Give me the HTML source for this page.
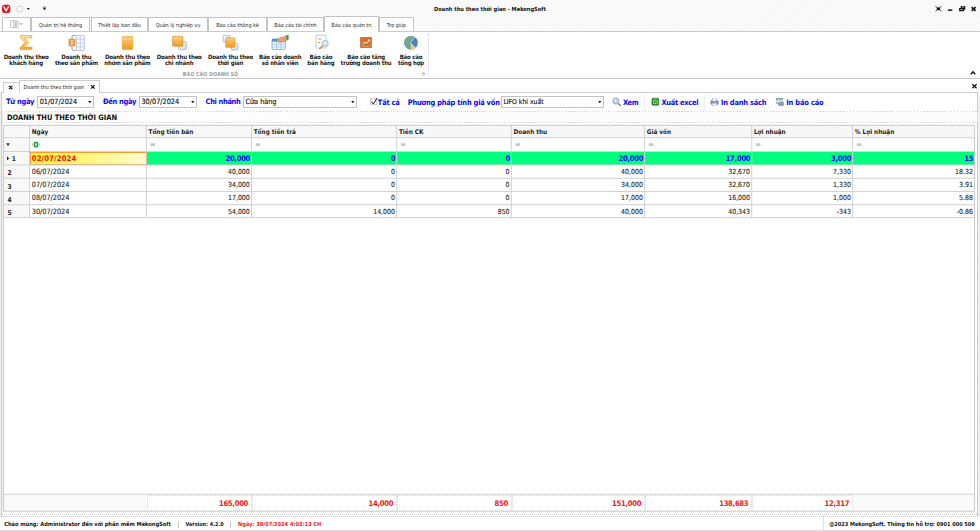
<!DOCTYPE html>
<html><head><meta charset="utf-8"><title>Doanh thu theo thời gian - MekongSoft</title>
<style>
*{box-sizing:border-box;margin:0;padding:0}
html,body{width:980px;height:531px;overflow:hidden;background:#fff}
body{font-family:"DejaVu Sans Condensed","Liberation Sans",sans-serif;font-size:6px;color:#222;position:relative}
div{position:absolute}
svg{position:absolute;overflow:visible}
.hatch{background:repeating-linear-gradient(135deg,#ffffff 0,#f3f3f3 1.060px,#ffffff 2.120px)}
.hatch2{background:repeating-linear-gradient(135deg,#ffffff 0,#f0f0f0 1.060px,#ffffff 2.120px)}
.t{white-space:nowrap;line-height:10px;height:10px}
.tab{top:17px;height:14px;border:1px solid #c4c4c4;border-bottom:none;background:#fff}
.box{border:1px solid #c3c3c3;background:#fff}
</style></head><body>

<div class="hatch" style="left:0;top:0;width:980px;height:31.500px"></div>
<div class="t" style="top:4.01px;font-size:5.66px;color:#111;font-weight:bold;left:340.00px;width:300px;text-align:center;">Doanh thu theo thời gian - MekongSoft</div>
<svg style="left:0;top:0" width="60" height="17" viewBox="0 0 60 17"><rect x="2" y="4.800" width="8.300" height="8.300" rx="2.400" fill="#e8121d"/><path d="M4 7 L6.100 11 L8.300 7" fill="none" stroke="#fff" stroke-width="1.500" stroke-linecap="round" stroke-linejoin="round"/><circle cx="19.600" cy="9" r="3" fill="#fff" stroke="#b9b9b9" stroke-width="0.700"/><path d="M26.800 8 h3 l-1.500 2z" fill="#222"/><path d="M42.800 7.800 h3.400 l-1.700 2.400z" fill="#222"/><rect x="42.800" y="6.800" width="3.400" height="0.600" fill="#444"/></svg>
<svg style="left:930px;top:0" width="50" height="17" viewBox="930 0 50 17"><g stroke="#111" fill="none"><path d="M935.400 6.300 l6.100 5 M941.500 6.300 l-6.100 5" stroke-width="0.700"/><path d="M936.800 7.500 h3.300 v2.600 h-3.300z" fill="#111" stroke="none"/><path d="M947.900 10.100 h4.400" stroke-width="1.500"/><path d="M959.800 8.600 h3.500 v2 h-3.500z M961.300 8.400 v-1.500 h3.300 v2.100 h-1.200" stroke-width="1.350"/><path d="M971.700 7.100 l3.900 3.700 M975.600 7.100 l-3.900 3.700" stroke-width="1.600"/></g></svg>
<div style="left:0;top:31px;width:980px;height:48px;background:#fff;border-top:1px solid #cbcbcb;border-bottom:1px solid #c6c6c6"></div>
<div class="tab" style="left:2px;width:29px"></div>
<div class="tab" style="left:31px;width:59px"></div>
<div class="t" style="top:19.86px;font-size:5.45px;color:#2a2a2a;left:-89.50px;width:300px;text-align:center;z-index:4;">Quản trị hệ thống</div>
<div class="tab" style="left:91px;width:57px"></div>
<div class="t" style="top:19.86px;font-size:5.45px;color:#2a2a2a;left:-30.50px;width:300px;text-align:center;z-index:4;">Thiết lập ban đầu</div>
<div class="tab" style="left:148px;width:60px"></div>
<div class="t" style="top:19.86px;font-size:5.45px;color:#2a2a2a;left:28.00px;width:300px;text-align:center;z-index:4;">Quản lý nghiệp vụ</div>
<div class="tab" style="left:208px;width:59px"></div>
<div class="t" style="top:19.86px;font-size:5.45px;color:#2a2a2a;left:87.50px;width:300px;text-align:center;z-index:4;">Báo cáo thống kê</div>
<div class="tab" style="left:267px;width:57px"></div>
<div class="t" style="top:19.86px;font-size:5.45px;color:#2a2a2a;left:145.50px;width:300px;text-align:center;z-index:4;">Báo cáo tài chính</div>
<div class="tab" style="left:324px;width:55px;top:16px;height:16px;z-index:3"></div>
<div class="t" style="top:19.86px;font-size:5.45px;color:#2a2a2a;left:201.50px;width:300px;text-align:center;z-index:4;">Báo cáo quản trị</div>
<div class="tab" style="left:379px;width:35px"></div>
<div class="t" style="top:19.86px;font-size:5.45px;color:#2a2a2a;left:246.50px;width:300px;text-align:center;z-index:4;">Trợ giúp</div>
<svg style="left:0;top:17px;z-index:4" width="32" height="14" viewBox="0 17 32 14"><rect x="10.500" y="20.700" width="7.900" height="6.800" rx="1.300" fill="#fff" stroke="#9a9a9a" stroke-width="0.600"/><path d="M13.800 20.700 v6.800" stroke="#9a9a9a" stroke-width="0.600"/><rect x="14.600" y="21.500" width="2.600" height="5.200" fill="#d8d8d8"/><path d="M15.200 22.700h1.400 M15.200 24.100h1.400 M15.200 25.500h1.400" stroke="#8a8a8a" stroke-width="0.500"/><path d="M20.100 23.500 h2.600 l-1.300 1.800z" fill="#fff" stroke="#8f8f8f" stroke-width="0.500"/></svg>
<div class="t" style="top:51.82px;font-size:6.0px;color:#1a1a1a;font-weight:bold;left:-123.90px;width:300px;text-align:center;letter-spacing:-0.170px;">Doanh thu theo</div>
<div class="t" style="top:58.02px;font-size:6.0px;color:#1a1a1a;font-weight:bold;left:-123.90px;width:300px;text-align:center;letter-spacing:-0.170px;">khách hàng</div>
<div class="t" style="top:51.82px;font-size:6.0px;color:#1a1a1a;font-weight:bold;left:-73.60px;width:300px;text-align:center;letter-spacing:-0.170px;">Doanh thu</div>
<div class="t" style="top:58.02px;font-size:6.0px;color:#1a1a1a;font-weight:bold;left:-73.60px;width:300px;text-align:center;letter-spacing:-0.170px;">theo sản phẩm</div>
<div class="t" style="top:51.82px;font-size:6.0px;color:#1a1a1a;font-weight:bold;left:-22.60px;width:300px;text-align:center;letter-spacing:-0.170px;">Doanh thu theo</div>
<div class="t" style="top:58.02px;font-size:6.0px;color:#1a1a1a;font-weight:bold;left:-22.60px;width:300px;text-align:center;letter-spacing:-0.170px;">nhóm sản phẩm</div>
<div class="t" style="top:51.82px;font-size:6.0px;color:#1a1a1a;font-weight:bold;left:29.20px;width:300px;text-align:center;letter-spacing:-0.170px;">Doanh thu theo</div>
<div class="t" style="top:58.02px;font-size:6.0px;color:#1a1a1a;font-weight:bold;left:29.20px;width:300px;text-align:center;letter-spacing:-0.170px;">chi nhánh</div>
<div class="t" style="top:51.82px;font-size:6.0px;color:#1a1a1a;font-weight:bold;left:80.50px;width:300px;text-align:center;letter-spacing:-0.170px;">Doanh thu theo</div>
<div class="t" style="top:58.02px;font-size:6.0px;color:#1a1a1a;font-weight:bold;left:80.50px;width:300px;text-align:center;letter-spacing:-0.170px;">thời gian</div>
<div class="t" style="top:51.82px;font-size:6.0px;color:#1a1a1a;font-weight:bold;left:130.20px;width:300px;text-align:center;letter-spacing:-0.170px;">Báo cáo doanh</div>
<div class="t" style="top:58.02px;font-size:6.0px;color:#1a1a1a;font-weight:bold;left:130.20px;width:300px;text-align:center;letter-spacing:-0.170px;">số nhân viên</div>
<div class="t" style="top:51.82px;font-size:6.0px;color:#1a1a1a;font-weight:bold;left:170.90px;width:300px;text-align:center;letter-spacing:-0.170px;">Báo cáo</div>
<div class="t" style="top:58.02px;font-size:6.0px;color:#1a1a1a;font-weight:bold;left:170.90px;width:300px;text-align:center;letter-spacing:-0.170px;">bán hàng</div>
<div class="t" style="top:51.82px;font-size:6.0px;color:#1a1a1a;font-weight:bold;left:216.20px;width:300px;text-align:center;letter-spacing:-0.170px;">Báo cáo tăng</div>
<div class="t" style="top:58.02px;font-size:6.0px;color:#1a1a1a;font-weight:bold;left:216.20px;width:300px;text-align:center;letter-spacing:-0.170px;">trưởng doanh thu</div>
<div class="t" style="top:51.82px;font-size:6.0px;color:#1a1a1a;font-weight:bold;left:261.00px;width:300px;text-align:center;letter-spacing:-0.170px;">Báo cáo</div>
<div class="t" style="top:58.02px;font-size:6.0px;color:#1a1a1a;font-weight:bold;left:261.00px;width:300px;text-align:center;letter-spacing:-0.170px;">tổng hợp</div>
<div class="t" style="top:69.11px;font-size:5.38px;color:#a0a0a0;font-weight:bold;left:60.50px;width:300px;text-align:center;">BÁO CÁO DOANH SỐ</div>
<svg style="left:0;top:32px" width="440" height="48" viewBox="0 32 440 48">
<defs><linearGradient id="og" x1="0" y1="0" x2="0" y2="1"><stop offset="0" stop-color="#fbd27a"/><stop offset="1" stop-color="#ee9a1c"/></linearGradient>
<linearGradient id="sg" x1="0" y1="0" x2="0" y2="1"><stop offset="0" stop-color="#fde6ab"/><stop offset="0.5" stop-color="#f9c865"/><stop offset="1" stop-color="#f1a531"/></linearGradient>
<linearGradient id="bg" x1="0" y1="0" x2="1" y2="1"><stop offset="0" stop-color="#fbfcff"/><stop offset="1" stop-color="#cfdaf0"/></linearGradient></defs>
<path d="M20.200 35.600 h11.600 v2.400 h-7.400 l4.200 4.500 l-4.400 4.600 h7.900 v2.500 h-12.100 v-1.900 l5 -5.200 l-4.800 -4.900z" fill="url(#sg)" stroke="#e29a2c" stroke-width="0.600" stroke-linejoin="round"/>
<g><path d="M75.600 35.600 H73.200 Q72 35.600 72 36.800 V49.200 Q72 50.400 73.200 50.400 H75.600" fill="#fff" stroke="#70789c" stroke-width="0.800"/><rect x="76.300" y="35.400" width="8" height="15.200" rx="1.500" fill="#f6f8fd" stroke="#a7b4db" stroke-width="0.800"/><path d="M80.300 35.400v15.200 M76.300 39.200h8 M76.300 43h8 M76.300 46.800h8" stroke="#b7c3e4" stroke-width="0.700"/><rect x="68.900" y="39" width="6.200" height="7" fill="#e9a23c" stroke="#cf8420" stroke-width="0.400"/><path d="M73.400 40.800h-2.600 l1.600 1.700 l-1.600 1.700h2.600" fill="none" stroke="#fff3d6" stroke-width="0.700"/></g>
<rect x="122.200" y="36.300" width="10.600" height="13.200" rx="1.300" fill="url(#og)" stroke="#e09426" stroke-width="0.500"/><path d="M122.400 39.300h10.200" stroke="#f9e0a2" stroke-width="0.700"/>
<rect x="178.400" y="41.400" width="7.800" height="8.200" rx="1" fill="url(#bg)" stroke="#93a6d8" stroke-width="0.700"/><rect x="172.500" y="36.300" width="10.500" height="10" rx="1" fill="url(#og)" stroke="#d08c30" stroke-width="0.600"/>
<rect x="223.200" y="35.200" width="6.600" height="6.600" rx="1" fill="url(#bg)" stroke="#93a6d8" stroke-width="0.700"/><rect x="231.100" y="43.100" width="6.800" height="6.800" rx="1" fill="url(#bg)" stroke="#93a6d8" stroke-width="0.700"/><rect x="225.700" y="37.700" width="9.300" height="9.600" rx="1" fill="url(#og)" stroke="#d08c30" stroke-width="0.600"/>
<g><rect x="272" y="38.900" width="13.400" height="10.600" rx="1" fill="#eef4fc" stroke="#6f9fd8" stroke-width="0.700"/><rect x="272" y="38.900" width="13.400" height="2.800" fill="#5b93d6"/><path d="M276.500 41.700v7.800 M281 41.700v7.800 M272 44.300h13.400 M272 46.900h13.400" stroke="#8db4e2" stroke-width="0.600"/><path d="M276.400 41.200 q3 -5 7 -4.200 l3 -1.400 l1.200 4.200 l-4 2 q-3.800 1.800 -7.200 -0.600z" fill="#e3a46c" stroke="#b87a44" stroke-width="0.400"/><path d="M285.800 35.600 l2.800 -0.800 v5 l-1.800 0.600z" fill="#3fa04c"/></g>
<g><rect x="315.900" y="35.200" width="10.200" height="12.800" rx="0.600" fill="#f7faff" stroke="#9db8e6" stroke-width="0.700"/><path d="M318 39h3.400 M318 42.300h2.400" stroke="#f0a030" stroke-width="1.200"/><path d="M323.400 45.400 l-3.600 3.200" stroke="#c9853a" stroke-width="1.400" stroke-linecap="round"/><circle cx="325.300" cy="43.400" r="2.900" fill="#dceaf9" stroke="#8fb0dd" stroke-width="0.900"/></g>
<g><rect x="360.100" y="37" width="11.800" height="11" rx="0.800" fill="#d4712c"/><path d="M362.600 44.400 l2.200 -2.400 l1.800 1.200 l2.800 -3 M368 40h1.600v1.600" fill="none" stroke="#fff" stroke-width="0.900"/><path d="M362 46.400h8" stroke="#f3c7a4" stroke-width="0.500"/></g>
<g><circle cx="411" cy="42.750" r="7" fill="#6da892"/><path d="M410.600 42.900 L415 37 A7 7 0 0 1 415.500 48.100z" fill="#4a7fc0" stroke="#eef3f8" stroke-width="0.500"/><path d="M410.800 43.200 L415.500 48.100 A7 7 0 0 1 411.400 49.740z" fill="#f3c768" stroke="#eef3f8" stroke-width="0.300"/></g>
<circle cx="423.200" cy="74" r="1.500" fill="#f4f4f4" stroke="#aaa" stroke-width="0.400"/><path d="M422.600 73.400 h1.400 v1.400" fill="none" stroke="#666" stroke-width="0.400"/>
</svg>
<div style="left:428px;top:34px;width:1px;height:42px;border-left:1px dotted #d4d4d4"></div>
<svg style="left:966px;top:68px" width="14" height="24" viewBox="966 68 14 24"><path d="M970.700 74.300 l2.300 -2.600 l2.300 2.600" fill="none" stroke="#111" stroke-width="1.300"/><path d="M972.400 84.300 l4.200 4 M976.600 84.300 l-4.200 4" stroke="#111" stroke-width="1.300"/></svg>
<div style="left:0;top:92px;width:980px;height:425px;background:#f0f0f0"></div>
<div style="left:1px;top:92px;width:977px;height:425px;border:1px solid #cdcdcd;border-bottom:1px dotted #c4c4c4;background:#fff"></div>
<div style="left:2px;top:111px;width:1px;height:404px;border-left:1px dotted #e2e2e2"></div><div style="left:977px;top:111px;width:1px;height:404px;border-left:1px dashed #c6c6c6"></div><div style="left:2px;top:514px;width:975px;height:1px;border-top:1px dotted #cccccc"></div>
<div class="hatch" style="left:3px;top:82px;width:17px;height:10.500px;border:1px solid #d0d0d0;border-bottom:none"></div>
<div style="left:19px;top:80px;width:80.500px;height:13px;border:1px solid #cbcbcb;border-bottom:none;background:#fff"></div>
<div class="t" style="top:81.71px;font-size:5.39px;color:#1e1e1e;left:23.50px;">Doanh thu theo thời gian</div>
<svg style="left:0;top:80px" width="100" height="13" viewBox="0 80 100 13"><path d="M9 85.800 l3.400 3.400 M12.400 85.800 l-3.400 3.400 M91 85.100 l3.600 3.600 M94.600 85.100 l-3.600 3.600" stroke="#111" stroke-width="1.200"/></svg>
<div class="t" style="top:97.15px;font-size:7.45px;color:#0a0af6;font-weight:bold;left:6.00px;letter-spacing:-0.235px;">Từ ngày</div>
<div class="box" style="left:37.3px;top:96px;width:57.2px;height:11.700px"></div>
<div class="t" style="top:97.14px;font-size:7.23px;color:#151515;left:39.70px;-webkit-text-stroke:0.150px #151515;">01/07/2024</div>
<svg style="left:88.40px;top:100.900px" width="4" height="3" viewBox="0 0 4 3"><path d="M0.200 0.100h3.200l-1.600 2.100z" fill="#111"/></svg>
<div class="t" style="top:97.15px;font-size:7.45px;color:#0a0af6;font-weight:bold;left:103.00px;letter-spacing:-0.286px;">Đến ngày</div>
<div class="box" style="left:139px;top:96px;width:58px;height:11.700px"></div>
<div class="t" style="top:97.15px;font-size:7.3px;color:#151515;left:141.40px;-webkit-text-stroke:0.150px #151515;">30/07/2024</div>
<svg style="left:190.90px;top:100.900px" width="4" height="3" viewBox="0 0 4 3"><path d="M0.200 0.100h3.200l-1.600 2.100z" fill="#111"/></svg>
<div class="t" style="top:97.15px;font-size:7.45px;color:#0a0af6;font-weight:bold;left:205.60px;letter-spacing:-0.340px;">Chi nhánh</div>
<div class="box" style="left:243.1px;top:96px;width:114.4px;height:11.700px"></div>
<div class="t" style="top:97.14px;font-size:7.2px;color:#151515;left:245.50px;-webkit-text-stroke:0.150px #151515;">Cửa hàng</div>
<svg style="left:351.40px;top:100.900px" width="4" height="3" viewBox="0 0 4 3"><path d="M0.200 0.100h3.200l-1.600 2.100z" fill="#111"/></svg>
<svg style="left:368px;top:95px" width="12" height="12" viewBox="368 95 12 12"><rect x="370.500" y="98.500" width="6.300" height="6.200" fill="#fff" stroke="#c2c2c2" stroke-width="0.700"/><path d="M371.300 101.600 l2.100 2.500 l3.700 -6.200" fill="none" stroke="#1a1a1a" stroke-width="1"/></svg>
<div class="t" style="top:98.15px;font-size:7.45px;color:#0a0af6;font-weight:bold;left:377.80px;letter-spacing:-0.213px;">Tất cả</div>
<div class="t" style="top:98.15px;font-size:7.45px;color:#0a0af6;font-weight:bold;left:407.80px;letter-spacing:-0.217px;">Phương pháp tính giá vốn</div>
<div class="box" style="left:501px;top:96px;width:102.60000000000002px;height:11.700px"></div>
<div class="t" style="top:97.14px;font-size:6.8px;color:#151515;left:503.40px;-webkit-text-stroke:0.150px #151515;">LIFO khi xuất</div>
<svg style="left:597.50px;top:100.900px" width="4" height="3" viewBox="0 0 4 3"><path d="M0.200 0.100h3.200l-1.600 2.100z" fill="#111"/></svg>
<div class="t" style="top:98.15px;font-size:7.45px;color:#0a0af6;font-weight:bold;left:622.90px;letter-spacing:-0.303px;">Xem</div>
<div class="t" style="top:98.15px;font-size:7.45px;color:#0a0af6;font-weight:bold;left:661.50px;letter-spacing:-0.293px;">Xuất excel</div>
<div class="t" style="top:98.15px;font-size:7.45px;color:#0a0af6;font-weight:bold;left:720.90px;letter-spacing:-0.215px;">In danh sách</div>
<div class="t" style="top:98.15px;font-size:7.45px;color:#0a0af6;font-weight:bold;left:786.20px;letter-spacing:-0.158px;">In báo cáo</div>
<svg style="left:608px;top:95px" width="180" height="13" viewBox="608 95 180 13">
<path d="M618.200 103.600 l2.300 1.900" stroke="#c87a34" stroke-width="1.500" stroke-linecap="round"/><circle cx="615.900" cy="101.100" r="3" fill="#b9d4f4" stroke="#94a6c6" stroke-width="1"/><circle cx="615.200" cy="100.300" r="1.200" fill="#e4effc"/>
<rect x="651.900" y="98.200" width="6.900" height="7.100" rx="0.900" fill="#2f8a30" stroke="#226a25" stroke-width="0.500"/><rect x="653.200" y="99.600" width="4.300" height="4.300" fill="#cfe8c8"/><path d="M653.600 100 l3.500 3.600 M657.100 100 l-3.500 3.600" stroke="#2c9a34" stroke-width="1.200"/>
<g><rect x="710.800" y="100.600" width="7.400" height="3.800" rx="0.900" fill="#8f9cba" stroke="#5f6c8c" stroke-width="0.600"/><rect x="712.400" y="98.300" width="4.200" height="2.700" fill="#fff" stroke="#9aa8c4" stroke-width="0.500"/><rect x="712.400" y="103.200" width="4.200" height="2.200" fill="#fff" stroke="#9aa8c4" stroke-width="0.500"/></g>
<g><rect x="776.200" y="98.300" width="6.600" height="5.400" fill="#eef3fa" stroke="#7f9ac4" stroke-width="0.600"/><rect x="776.200" y="98.300" width="6.600" height="1.300" fill="#6aa84f"/><path d="M777.400 101h4" stroke="#8aa4cc" stroke-width="0.600"/><rect x="778.400" y="102.400" width="5.200" height="3" rx="0.600" fill="#8f9cba" stroke="#5f6c8c" stroke-width="0.500"/></g>
</svg>
<div style="left:644.1px;top:95px;width:1px;height:14.500px;border-left:1px dotted #e2e2e2"></div>
<div style="left:703.8px;top:95px;width:1px;height:14.500px;border-left:1px dotted #e2e2e2"></div>
<div class="hatch" style="left:2.500px;top:111.500px;width:975px;height:11px;opacity:.4"></div>
<div style="left:2px;top:111px;width:975px;height:1px;background:repeating-linear-gradient(90deg,#dadada 0,#dadada 1.500px,transparent 1.500px,transparent 3.060px)"></div>
<div style="left:2px;top:122px;width:975px;height:1px;background:repeating-linear-gradient(90deg,#dadada 0,#dadada 1.500px,transparent 1.500px,transparent 3.060px)"></div>
<div class="t" style="top:113.25px;font-size:7.44px;color:#111;font-weight:bold;left:7.00px;">DOANH THU THEO THỜI GIAN</div>
<div class="hatch2" style="left:3.6px;top:125.3px;width:971.0px;height:12.399999999999991px"></div>
<div class="hatch2" style="left:3.6px;top:125.3px;width:26.0px;height:92.3px"></div>
<div style="left:146.3px;top:151.70000000000002px;width:828.3px;height:13.549999999999983px;background:#00ff7f"></div>
<div style="left:29.6px;top:151.70000000000002px;width:117.10000000000002px;height:13.749999999999982px;background:linear-gradient(90deg,#fff22a 0%,#fff680 50%,#fffbd0 100%);border:1px solid #f0a030"></div>
<div class="hatch" style="left:3.6px;top:494.5px;width:142.70000000000002px;height:16.500px"></div>
<div class="hatch" style="left:852.6px;top:494.5px;width:122.0px;height:16.500px"></div>
<svg style="left:0;top:0" width="980" height="531" viewBox="0 0 980 531"><g stroke="#d0d0d0" stroke-width="1" fill="none"><path d="M3.6 137.7H974.6"/><path d="M3.6 151.4H974.6"/><path d="M3.6 164.95H974.6"/><path d="M3.6 178.2H974.6"/><path d="M3.6 191.45H974.6"/><path d="M3.6 204.7H974.6"/><path d="M3.6 217.6H974.6"/><path d="M29.6 125.3V217.6"/><path d="M146.3 125.3V217.6"/><path d="M251.5 125.3V217.6"/><path d="M396.7 125.3V217.6"/><path d="M511.3 125.3V217.6"/><path d="M644.6 125.3V217.6"/><path d="M751.75 125.3V217.6"/><path d="M852.6 125.3V217.6"/><path d="M3.6 494.200H974.6"/><rect x="3.6" y="125.3" width="971.0" height="385.9" fill="none" stroke="#c9c9c9"/></g></svg>
<div class="t" style="top:127.33px;font-size:6.38px;color:#1c1c1c;font-weight:bold;left:31.80px;">Ngày</div>
<div class="t" style="top:127.33px;font-size:6.38px;color:#1c1c1c;font-weight:bold;left:148.50px;">Tổng tiền bán</div>
<div class="t" style="top:127.33px;font-size:6.38px;color:#1c1c1c;font-weight:bold;left:253.70px;">Tổng tiền trả</div>
<div class="t" style="top:127.33px;font-size:6.38px;color:#1c1c1c;font-weight:bold;left:398.90px;">Tiền CK</div>
<div class="t" style="top:127.33px;font-size:6.38px;color:#1c1c1c;font-weight:bold;left:513.50px;">Doanh thu</div>
<div class="t" style="top:127.33px;font-size:6.38px;color:#1c1c1c;font-weight:bold;left:646.80px;">Giá vốn</div>
<div class="t" style="top:127.33px;font-size:6.38px;color:#1c1c1c;font-weight:bold;left:753.95px;">Lợi nhuận</div>
<div class="t" style="top:127.33px;font-size:6.38px;color:#1c1c1c;font-weight:bold;left:854.80px;">% Lợi nhuận</div>
<svg style="left:0;top:138px" width="980" height="14" viewBox="0 138 980 14"><path d="M6.400 143.200 h3.200 l-1.600 3z" fill="#222"/><rect x="34" y="142" width="4" height="5.200" rx="1" fill="#2fb344" stroke="#1f8f30" stroke-width="0.500"/><rect x="35.300" y="143.500" width="1.400" height="2.200" fill="#d8f3dc"/><path d="M32.600 143.600v2 M39.400 143.600v2" stroke="#777" stroke-width="0.600"/><path d="M150.60000000000002 144h4.400 M150.60000000000002 145.200h4.400" stroke="#8a8a8a" stroke-width="0.700"/><path d="M255.8 144h4.400 M255.8 145.200h4.400" stroke="#8a8a8a" stroke-width="0.700"/><path d="M401.0 144h4.400 M401.0 145.200h4.400" stroke="#8a8a8a" stroke-width="0.700"/><path d="M515.6 144h4.400 M515.6 145.200h4.400" stroke="#8a8a8a" stroke-width="0.700"/><path d="M648.9 144h4.400 M648.9 145.200h4.400" stroke="#8a8a8a" stroke-width="0.700"/><path d="M756.05 144h4.400 M756.05 145.200h4.400" stroke="#8a8a8a" stroke-width="0.700"/><path d="M856.9 144h4.400 M856.9 145.200h4.400" stroke="#8a8a8a" stroke-width="0.700"/></svg>
<div class="t" style="top:153.98px;font-size:6.6px;color:#222;font-weight:bold;left:11.70px;">1</div>
<div class="t" style="top:153.90px;font-size:7.6px;color:#f41010;font-weight:bold;left:31.80px;letter-spacing:0.160px;">02/07/2024</div>
<div class="t" style="top:153.90px;font-size:7.6px;color:#0a0af0;font-weight:bold;left:-49.92px;width:300px;text-align:right;letter-spacing:-0.280px;">20,000</div>
<div class="t" style="top:153.90px;font-size:7.6px;color:#0a0af0;font-weight:bold;left:95.28px;width:300px;text-align:right;letter-spacing:-0.280px;">0</div>
<div class="t" style="top:153.90px;font-size:7.6px;color:#0a0af0;font-weight:bold;left:209.88px;width:300px;text-align:right;letter-spacing:-0.280px;">0</div>
<div class="t" style="top:153.90px;font-size:7.6px;color:#0a0af0;font-weight:bold;left:343.18px;width:300px;text-align:right;letter-spacing:-0.280px;">20,000</div>
<div class="t" style="top:153.90px;font-size:7.6px;color:#0a0af0;font-weight:bold;left:450.33px;width:300px;text-align:right;letter-spacing:-0.280px;">17,000</div>
<div class="t" style="top:153.90px;font-size:7.6px;color:#0a0af0;font-weight:bold;left:551.18px;width:300px;text-align:right;letter-spacing:-0.280px;">3,000</div>
<div class="t" style="top:153.90px;font-size:7.6px;color:#0a0af0;font-weight:bold;left:673.18px;width:300px;text-align:right;letter-spacing:-0.280px;">15</div>
<div class="t" style="top:168.33px;font-size:6.6px;color:#222;font-weight:bold;left:7.50px;">2</div>
<div class="t" style="top:166.84px;font-size:7.25px;color:#2a2a2a;left:31.80px;-webkit-text-stroke:0.120px #2a2a2a;">06/07/2024</div>
<div class="t" style="top:166.84px;font-size:6.95px;color:#2a2a2a;left:-50.20px;width:300px;text-align:right;-webkit-text-stroke:0.120px #2a2a2a;">40,000</div>
<div class="t" style="top:166.84px;font-size:6.95px;color:#2a2a2a;left:95.00px;width:300px;text-align:right;-webkit-text-stroke:0.120px #2a2a2a;">0</div>
<div class="t" style="top:166.84px;font-size:6.95px;color:#2a2a2a;left:209.60px;width:300px;text-align:right;-webkit-text-stroke:0.120px #2a2a2a;">0</div>
<div class="t" style="top:166.84px;font-size:6.95px;color:#2a2a2a;left:342.90px;width:300px;text-align:right;-webkit-text-stroke:0.120px #2a2a2a;">40,000</div>
<div class="t" style="top:166.84px;font-size:6.95px;color:#2a2a2a;left:450.05px;width:300px;text-align:right;-webkit-text-stroke:0.120px #2a2a2a;">32,670</div>
<div class="t" style="top:166.84px;font-size:6.95px;color:#2a2a2a;left:550.90px;width:300px;text-align:right;-webkit-text-stroke:0.120px #2a2a2a;">7,330</div>
<div class="t" style="top:166.84px;font-size:6.95px;color:#2a2a2a;left:672.90px;width:300px;text-align:right;-webkit-text-stroke:0.120px #2a2a2a;">18.32</div>
<div class="t" style="top:181.58px;font-size:6.6px;color:#222;font-weight:bold;left:7.50px;">3</div>
<div class="t" style="top:180.09px;font-size:7.25px;color:#2a2a2a;left:31.80px;-webkit-text-stroke:0.120px #2a2a2a;">07/07/2024</div>
<div class="t" style="top:180.09px;font-size:6.95px;color:#2a2a2a;left:-50.20px;width:300px;text-align:right;-webkit-text-stroke:0.120px #2a2a2a;">34,000</div>
<div class="t" style="top:180.09px;font-size:6.95px;color:#2a2a2a;left:95.00px;width:300px;text-align:right;-webkit-text-stroke:0.120px #2a2a2a;">0</div>
<div class="t" style="top:180.09px;font-size:6.95px;color:#2a2a2a;left:209.60px;width:300px;text-align:right;-webkit-text-stroke:0.120px #2a2a2a;">0</div>
<div class="t" style="top:180.09px;font-size:6.95px;color:#2a2a2a;left:342.90px;width:300px;text-align:right;-webkit-text-stroke:0.120px #2a2a2a;">34,000</div>
<div class="t" style="top:180.09px;font-size:6.95px;color:#2a2a2a;left:450.05px;width:300px;text-align:right;-webkit-text-stroke:0.120px #2a2a2a;">32,670</div>
<div class="t" style="top:180.09px;font-size:6.95px;color:#2a2a2a;left:550.90px;width:300px;text-align:right;-webkit-text-stroke:0.120px #2a2a2a;">1,330</div>
<div class="t" style="top:180.09px;font-size:6.95px;color:#2a2a2a;left:672.90px;width:300px;text-align:right;-webkit-text-stroke:0.120px #2a2a2a;">3.91</div>
<div class="t" style="top:194.83px;font-size:6.6px;color:#222;font-weight:bold;left:7.50px;">4</div>
<div class="t" style="top:193.34px;font-size:7.25px;color:#2a2a2a;left:31.80px;-webkit-text-stroke:0.120px #2a2a2a;">08/07/2024</div>
<div class="t" style="top:193.34px;font-size:6.95px;color:#2a2a2a;left:-50.20px;width:300px;text-align:right;-webkit-text-stroke:0.120px #2a2a2a;">17,000</div>
<div class="t" style="top:193.34px;font-size:6.95px;color:#2a2a2a;left:95.00px;width:300px;text-align:right;-webkit-text-stroke:0.120px #2a2a2a;">0</div>
<div class="t" style="top:193.34px;font-size:6.95px;color:#2a2a2a;left:209.60px;width:300px;text-align:right;-webkit-text-stroke:0.120px #2a2a2a;">0</div>
<div class="t" style="top:193.34px;font-size:6.95px;color:#2a2a2a;left:342.90px;width:300px;text-align:right;-webkit-text-stroke:0.120px #2a2a2a;">17,000</div>
<div class="t" style="top:193.34px;font-size:6.95px;color:#2a2a2a;left:450.05px;width:300px;text-align:right;-webkit-text-stroke:0.120px #2a2a2a;">16,000</div>
<div class="t" style="top:193.34px;font-size:6.95px;color:#2a2a2a;left:550.90px;width:300px;text-align:right;-webkit-text-stroke:0.120px #2a2a2a;">1,000</div>
<div class="t" style="top:193.34px;font-size:6.95px;color:#2a2a2a;left:672.90px;width:300px;text-align:right;-webkit-text-stroke:0.120px #2a2a2a;">5.88</div>
<div class="t" style="top:208.08px;font-size:6.6px;color:#222;font-weight:bold;left:7.50px;">5</div>
<div class="t" style="top:206.59px;font-size:7.25px;color:#2a2a2a;left:31.80px;-webkit-text-stroke:0.120px #2a2a2a;">30/07/2024</div>
<div class="t" style="top:206.59px;font-size:6.95px;color:#2a2a2a;left:-50.20px;width:300px;text-align:right;-webkit-text-stroke:0.120px #2a2a2a;">54,000</div>
<div class="t" style="top:206.59px;font-size:6.95px;color:#2a2a2a;left:95.00px;width:300px;text-align:right;-webkit-text-stroke:0.120px #2a2a2a;">14,000</div>
<div class="t" style="top:206.59px;font-size:6.95px;color:#2a2a2a;left:209.60px;width:300px;text-align:right;-webkit-text-stroke:0.120px #2a2a2a;">850</div>
<div class="t" style="top:206.59px;font-size:6.95px;color:#2a2a2a;left:342.90px;width:300px;text-align:right;-webkit-text-stroke:0.120px #2a2a2a;">40,000</div>
<div class="t" style="top:206.59px;font-size:6.95px;color:#2a2a2a;left:450.05px;width:300px;text-align:right;-webkit-text-stroke:0.120px #2a2a2a;">40,343</div>
<div class="t" style="top:206.59px;font-size:6.95px;color:#2a2a2a;left:550.90px;width:300px;text-align:right;-webkit-text-stroke:0.120px #2a2a2a;">-343</div>
<div class="t" style="top:206.59px;font-size:6.95px;color:#2a2a2a;left:672.90px;width:300px;text-align:right;-webkit-text-stroke:0.120px #2a2a2a;">-0.86</div>
<svg style="left:4px;top:153px" width="8" height="10" viewBox="4 153 8 10"><path d="M7 156.500 l2.200 1.900 l-2.200 1.900z" fill="#111"/></svg>
<div style="left:146.60000000000002px;top:495px;width:105.6px;height:16px;border:1px dotted #d9d9d9;background:#fff"></div>
<div class="t" style="top:498.75px;font-size:7.6px;color:#f41414;font-weight:bold;left:-51.92px;width:300px;text-align:right;letter-spacing:-0.280px;">165,000</div>
<div style="left:251.8px;top:495px;width:145.6px;height:16px;border:1px dotted #d9d9d9;background:#fff"></div>
<div class="t" style="top:498.75px;font-size:7.6px;color:#f41414;font-weight:bold;left:93.28px;width:300px;text-align:right;letter-spacing:-0.280px;">14,000</div>
<div style="left:397.0px;top:495px;width:115.00000000000003px;height:16px;border:1px dotted #d9d9d9;background:#fff"></div>
<div class="t" style="top:498.75px;font-size:7.6px;color:#f41414;font-weight:bold;left:207.88px;width:300px;text-align:right;letter-spacing:-0.280px;">850</div>
<div style="left:511.6px;top:495px;width:133.70000000000002px;height:16px;border:1px dotted #d9d9d9;background:#fff"></div>
<div class="t" style="top:498.75px;font-size:7.6px;color:#f41414;font-weight:bold;left:341.18px;width:300px;text-align:right;letter-spacing:-0.280px;">151,000</div>
<div style="left:644.9px;top:495px;width:107.54999999999998px;height:16px;border:1px dotted #d9d9d9;background:#fff"></div>
<div class="t" style="top:498.75px;font-size:7.6px;color:#f41414;font-weight:bold;left:448.33px;width:300px;text-align:right;letter-spacing:-0.280px;">138,683</div>
<div style="left:752.05px;top:495px;width:101.25000000000003px;height:16px;border:1px dotted #d9d9d9;background:#fff"></div>
<div class="t" style="top:498.75px;font-size:7.6px;color:#f41414;font-weight:bold;left:549.18px;width:300px;text-align:right;letter-spacing:-0.280px;">12,317</div>
<div style="left:0;top:529.700px;width:980px;height:1.300px;background:#d5e0ef"></div>
<div class="t" style="top:518.91px;font-size:5.66px;color:#111;font-weight:bold;left:4.20px;">Chào mừng: Administrator đến với phần mềm MekongSoft</div>
<div class="t" style="top:518.91px;font-size:5.46px;color:#111;font-weight:bold;left:185.40px;">Version: 4.2.0</div>
<div class="t" style="top:518.91px;font-size:5.63px;color:#ee1c1c;font-weight:bold;left:238.10px;">Ngày: 30/07/2024 4:03:13 CH</div>
<div class="t" style="top:518.91px;font-size:5.55px;color:#111;font-weight:bold;left:674.80px;width:300px;text-align:right;">@2023 MekongSoft. Thông tin hỗ trợ: 0901 000 508</div>
<div style="left:177.500px;top:520.500px;width:1px;height:7px;background:#c4c4c4"></div><div style="left:230.300px;top:520.500px;width:1px;height:7px;background:#c4c4c4"></div>
<div style="left:823px;top:517px;width:1px;height:12.500px;border-left:1px dotted #c8c8c8"></div>
</body></html>
